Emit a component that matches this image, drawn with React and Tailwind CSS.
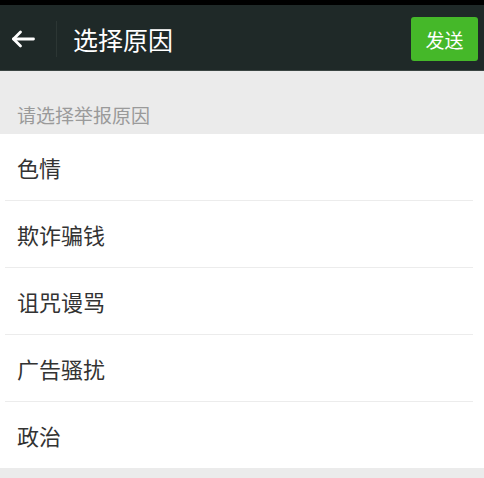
const reasons = ["色情", "欺诈骗钱", "诅咒谩骂", "广告骚扰", "政治"]

function BackArrow() {
    return (
        <svg width="24" height="18" viewBox="0 0 24 18" fill="none" stroke="white" strokeWidth="2.8" strokeLinecap="round" strokeLinejoin="round">
            <path d="M22.5 9H2.5" />
            <path d="M9.5 2L2.5 9L9.5 16" />
        </svg>
    )
}

function App() {
    return (
        <div
            className="w-[484px] h-[478px] bg-[#ebebeb] overflow-hidden"
            style={{ fontFamily: '"Noto Sans CJK SC", "Noto Sans", sans-serif' }}
        >
            <div className="h-[5px] bg-black" />
            <header className="h-[66px] bg-[#1f2928] flex items-center pt-[3px] border-b border-[#3a4442]">
                <div className="w-[56px] flex items-center pl-[11px]">
                    <BackArrow />
                </div>
                <div className="w-px h-[36px] bg-[#2c3634]" />
                <h1 className="ml-[16px] text-[25px] text-white leading-none">选择原因</h1>
                <button className="ml-auto mr-[6px] w-[67px] h-[44px] rounded-[3px] bg-[#45b829] text-white text-[19px] leading-none">
                    发送
                </button>
            </header>
            <div className="h-[63px] flex items-end pb-[10px] pl-[17px] text-[19px] text-[#9a9a9a] leading-none">
                请选择举报原因
            </div>
            <ul className="bg-white">
                {reasons.map((r, i) => (
                    <li key={r}>
                        {i > 0 && <div className="ml-[5px] mr-[11px] h-px bg-[#ececec]" />}
                        <div className="h-[66px] flex items-center pl-[17px] text-[22px] text-[#333] leading-none">
                            {r}
                        </div>
                    </li>
                ))}
            </ul>
        </div>
    )
}

export default App
